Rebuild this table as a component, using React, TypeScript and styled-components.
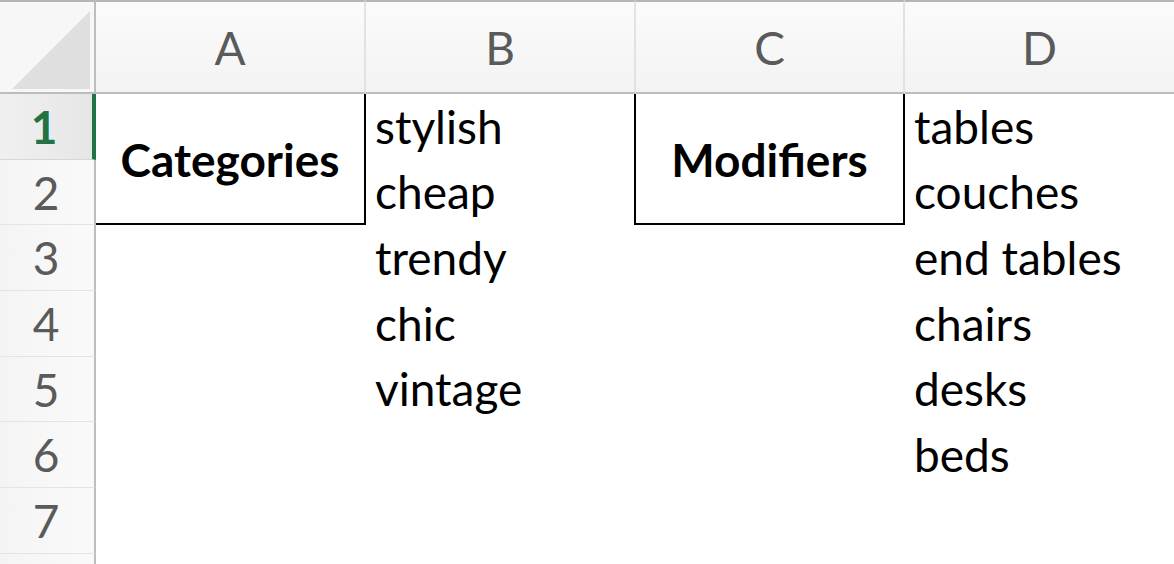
import React from 'react';
import styled, {createGlobalStyle} from 'styled-components';

const GlobalStyle = createGlobalStyle`
  html, body {
    margin: 0;
    padding: 0;
    background: #ffffff;
  }
  body {
    font-family: "Lato", "Open Sans", sans-serif;
    overflow: hidden;
  }
`;

const Sheet = styled.div`
  display: grid;
  grid-template-columns: 96px 270px 270px 269px 1fr;
  grid-template-rows: 94px repeat(8, 65.7px);
  width: 1174px;
  height: 564px;
  background: #ffffff;
  overflow: hidden;
`;

const Corner = styled.div`
  grid-column: 1;
  grid-row: 1;
  position: relative;
  background: #f7f7f7;
  border-top: 2px solid #b5b5b5;
  border-right: 2px solid #bdbdbd;
  border-bottom: 2px solid #bdbdbd;
  overflow: hidden;
`;

const CornerTriangle = styled.div`
  position: absolute;
  right: 4px;
  bottom: 3px;
  width: 78px;
  height: 78px;
  background: #dfdfdf;
  clip-path: polygon(100% 0, 100% 100%, 0 100%);
`;

const ColHeader = styled.div<{$last?: boolean}>`
  grid-row: 1;
  display: flex;
  align-items: center;
  justify-content: center;
  background: linear-gradient(#fbfbfb, #f3f3f3);
  border-top: 2px solid #b5b5b5;
  border-bottom: 2px solid #bdbdbd;
  border-right: ${p => (p.$last ? 'none' : '2px solid #e2e2e2')};
  color: #5a5a5a;
  font-size: 46px;
`;

const RowHeader = styled.div<{$active?: boolean}>`
  grid-column: 1;
  display: flex;
  align-items: center;
  justify-content: center;
  background: ${p =>
    p.$active
      ? 'linear-gradient(90deg, #f0f0f0, #e6e6e6)'
      : 'linear-gradient(90deg, #f4f4f4, #fafafa)'};
  border-right: ${p => (p.$active ? '4px solid #217346' : '2px solid #bdbdbd')};
  border-bottom: 1px solid ${p => (p.$active ? '#d6d6d6' : '#e4e4e4')};
  color: ${p => (p.$active ? '#217346' : '#5a5a5a')};
  font-weight: ${p => (p.$active ? 700 : 400)};
  font-size: 46px;
  padding-right: ${p => (p.$active ? '4px' : '2px')};
`;

const HeadingCell = styled.div<{$col: number; $boxed?: boolean}>`
  grid-column: ${p => p.$col};
  grid-row: 2 / span 2;
  display: flex;
  align-items: center;
  justify-content: center;
  border-right: 2px solid #000000;
  border-bottom: 2px solid #000000;
  border-left: ${p => (p.$boxed ? '2px solid #000000' : 'none')};
  margin-left: ${p => (p.$boxed ? '-2px' : '0')};
  font-size: 46px;
  font-weight: 700;
  color: #000000;
  padding-top: 2px;
`;

const Cell = styled.div<{$col: number; $row: number}>`
  grid-column: ${p => p.$col};
  grid-row: ${p => p.$row};
  display: flex;
  align-items: flex-end;
  padding: 0 0 10px 9px;
  font-size: 46px;
  line-height: 1;
  color: #000000;
  white-space: nowrap;
`;

const columns = ['A', 'B', 'C', 'D'];
const rows = [1, 2, 3, 4, 5, 6, 7];
const categories = ['stylish', 'cheap', 'trendy', 'chic', 'vintage'];
const modifiers = ['tables', 'couches', 'end tables', 'chairs', 'desks', 'beds'];

const App: React.FC = () => {
    return (
        <>
            <GlobalStyle/>
            <Sheet>
                <Corner>
                    <CornerTriangle/>
                </Corner>
                {columns.map((c, i) => (
                    <ColHeader key={c} style={{gridColumn: i + 2}} $last={i === columns.length - 1}>
                        {c}
                    </ColHeader>
                ))}
                {rows.map(n => (
                    <RowHeader key={n} style={{gridRow: n + 1}} $active={n === 1}>
                        {n}
                    </RowHeader>
                ))}
                {/* next row header, only its top edge is in view */}
                <RowHeader style={{gridRow: rows.length + 2}}/>
                <HeadingCell $col={2}>Categories</HeadingCell>
                <HeadingCell $col={4} $boxed>Modifiers</HeadingCell>
                {categories.map((t, i) => (
                    <Cell key={t} $col={3} $row={i + 2}>{t}</Cell>
                ))}
                {modifiers.map((t, i) => (
                    <Cell key={t} $col={5} $row={i + 2}>{t}</Cell>
                ))}
            </Sheet>
        </>
    );
};

export default App;
